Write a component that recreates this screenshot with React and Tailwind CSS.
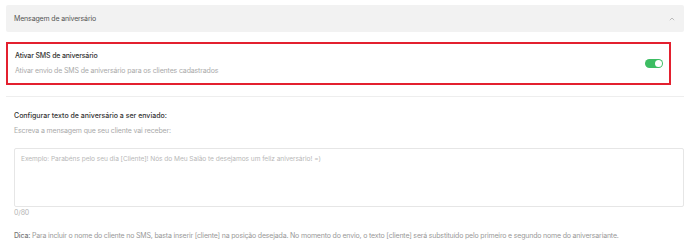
import React from 'react';

function Toggle({ on }) {
  return (
    <div
      className={`flex h-[9px] w-[18px] items-center rounded-full px-[1px] ${
        on ? 'justify-end bg-[#3dbd63]' : 'justify-start bg-gray-300'
      }`}
    >
      <span className="h-[7px] w-[7px] rounded-full bg-white"></span>
    </div>
  );
}

function ChevronUp() {
  return (
    <svg width="6" height="4" viewBox="0 0 6 4" fill="none">
      <path d="M0.8 3.2 L3 1 L5.2 3.2" stroke="#b5b5b5" strokeWidth="0.9" />
    </svg>
  );
}

export default function App() {
  return (
    <div className="h-[248px] w-[688px] bg-white font-['Inter',sans-serif] text-[7px] leading-[12px] tracking-[-0.15px]">
      <div className="pl-[6px] pr-[4px] pt-[5px]">
        {/* Accordion header */}
        <div className="flex h-[27px] items-center justify-between rounded-[2px] bg-[#f2f2f2] pl-[8px] pr-[9px]">
          <span className="text-[#555555]">Mensagem de aniversário</span>
          <ChevronUp />
        </div>

        {/* SMS toggle card */}
        <div className="mt-[10px] mr-[13px] flex h-[43px] items-center justify-between border-2 border-[#e3202f] pl-[7px] pr-[6px]">
          <div className="flex flex-col gap-[3px]">
            <span className="font-medium text-[#333333]">Ativar SMS de aniversário</span>
            <span className="text-[#aaaaaa]">Ativar envio de SMS de aniversário para os clientes cadastrados</span>
          </div>
          <Toggle on />
        </div>

        <div className="mt-[11px] h-[1px] bg-[#eeeeee]"></div>

        {/* Message config */}
        <div className="pl-[8px] pt-[13px]">
          <p className="font-medium text-[#333333] tracking-[0px]">Configurar texto de aniversário a ser enviado:</p>
          <p className="mt-[3px] text-[#aaaaaa]">Escreva a mensagem que seu cliente vai receber:</p>
          <textarea
            className="mt-[11px] block h-[59px] w-full resize-none rounded-[2px] border border-[#e6e6e6] px-[6px] py-[4px] text-[6.6px] leading-[12px] tracking-[-0.05px] text-[#333333] outline-none placeholder:text-[#b8b8b8]"
            placeholder="Exemplo: Parabéns pelo seu dia [Cliente]! Nós do Meu Salão te desejamos um feliz aniversário! =)"
          />
          <p className="text-[#b5b5b5]">0/80</p>
          <p className="mt-[11px] text-[#999999] tracking-[-0.18px]">
            <span className="font-medium text-[#777777]">Dica:</span> Para incluir o nome do cliente no SMS, basta inserir [cliente] na posição desejada. No momento do envio, o texto [cliente] será substituído pelo primeiro e segundo nome do aniversariante.
          </p>
        </div>
      </div>
    </div>
  );
}
